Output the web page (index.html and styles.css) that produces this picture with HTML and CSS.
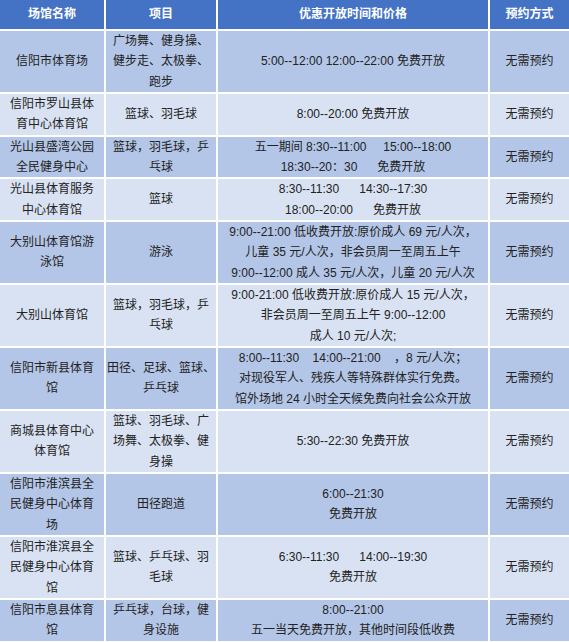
FILE: index.html
```html
<!DOCTYPE html>
<html lang="zh-CN">
<head>
<meta charset="utf-8">
<title>场馆优惠开放</title>
<link rel="stylesheet" href="styles.css">
</head>
<body>
<table class="venues">
  <colgroup>
    <col class="c-name">
    <col class="c-item">
    <col class="c-time">
    <col class="c-book">
  </colgroup>
  <thead>
    <tr>
      <th>场馆名称</th>
      <th>项目</th>
      <th>优惠开放时间和价格</th>
      <th>预约方式</th>
    </tr>
  </thead>
  <tbody>
    <tr class="odd">
      <td>信阳市体育场</td>
      <td>广场舞、健身操、<br>健步走、太极拳、<br>跑步</td>
      <td>5:00--12:00 12:00--22:00 免费开放</td>
      <td>无需预约</td>
    </tr>
    <tr class="even">
      <td>信阳市罗山县体<br>育中心体育馆</td>
      <td>篮球、羽毛球</td>
      <td>8:00--20:00 免费开放</td>
      <td>无需预约</td>
    </tr>
    <tr class="odd">
      <td>光山县盛湾公园<br>全民健身中心</td>
      <td>篮球，羽毛球，乒<br>乓球</td>
      <td>五一期间 8:30--11:00&nbsp;&nbsp;&nbsp;&nbsp; 15:00--18:00<br>18:30--20：30&nbsp;&nbsp;&nbsp;&nbsp;&nbsp; 免费开放</td>
      <td>无需预约</td>
    </tr>
    <tr class="even">
      <td>光山县体育服务<br>中心体育馆</td>
      <td>篮球</td>
      <td>8:30--11:30&nbsp;&nbsp;&nbsp;&nbsp;&nbsp; 14:30--17:30<br>18:00--20:00&nbsp;&nbsp;&nbsp;&nbsp;&nbsp; 免费开放</td>
      <td>无需预约</td>
    </tr>
    <tr class="odd">
      <td>大别山体育馆游<br>泳馆</td>
      <td>游泳</td>
      <td>9:00--21:00 低收费开放:原价成人 69 元/人次，<br>儿童 35 元/人次，非会员周一至周五上午<br>9:00--12:00 成人 35 元/人次，儿童 20 元/人次</td>
      <td>无需预约</td>
    </tr>
    <tr class="even">
      <td>大别山体育馆</td>
      <td>篮球，羽毛球，乒<br>乓球</td>
      <td>9:00-21:00 低收费开放:原价成人 15 元/人次，<br>非会员周一至周五上午 9:00--12:00<br>成人 10 元/人次;</td>
      <td>无需预约</td>
    </tr>
    <tr class="odd">
      <td>信阳市新县体育<br>馆</td>
      <td>田径、足球、篮球、<br>乒乓球</td>
      <td>8:00--11:30&nbsp;&nbsp;&nbsp; 14:00--21:00&nbsp;&nbsp;&nbsp; ，8 元/人次；<br>对现役军人、残疾人等特殊群体实行免费。<br>馆外场地 24 小时全天候免费向社会公众开放</td>
      <td>无需预约</td>
    </tr>
    <tr class="even">
      <td>商城县体育中心<br>体育馆</td>
      <td>篮球、羽毛球、广<br>场舞、太极拳、健<br>身操</td>
      <td>5:30--22:30 免费开放</td>
      <td>无需预约</td>
    </tr>
    <tr class="odd">
      <td>信阳市淮滨县全<br>民健身中心体育<br>场</td>
      <td>田径跑道</td>
      <td>6:00--21:30<br>免费开放</td>
      <td>无需预约</td>
    </tr>
    <tr class="even">
      <td>信阳市淮滨县全<br>民健身中心体育<br>馆</td>
      <td>篮球、乒乓球、羽<br>毛球</td>
      <td>6:30--11:30&nbsp;&nbsp;&nbsp;&nbsp;&nbsp; 14:00--19:30<br>免费开放</td>
      <td>无需预约</td>
    </tr>
    <tr class="odd">
      <td>信阳市息县体育<br>馆</td>
      <td>乒乓球，台球，健<br>身设施</td>
      <td>8:00--21:00<br>五一当天免费开放，其他时间段低收费</td>
      <td>无需预约</td>
    </tr>
  </tbody>
</table>
</body>
</html>
```

FILE: styles.css
```css
html, body {
  margin: 0;
  padding: 0;
  background: #ffffff;
}

.venues {
  width: 569px;
  table-layout: fixed;
  border-collapse: separate;
  border-spacing: 0;
  font-family: "Liberation Sans", "Noto Sans CJK SC", sans-serif;
  font-size: 12px;
  line-height: 20.33px;
  color: #222222;
}

.c-name { width: 106px; }
.c-item { width: 112px; }
.c-time { width: 272px; }
.c-book { width: 79px; }

.venues th,
.venues td {
  padding: 0;
  text-align: center;
  vertical-align: middle;
  border-right: 2px solid #ffffff;
  border-bottom: 2px solid #ffffff;
  white-space: nowrap;
  overflow: hidden;
}

.venues th:last-child,
.venues td:last-child {
  border-right: 0;
}

.venues th {
  background: #4472c4;
  color: #ffffff;
  font-weight: bold;
  height: 29px;
  padding: 0;
}

.odd td {
  background: #b4c6e7;
}

.even td {
  background: #d9e2f3;
}
```
